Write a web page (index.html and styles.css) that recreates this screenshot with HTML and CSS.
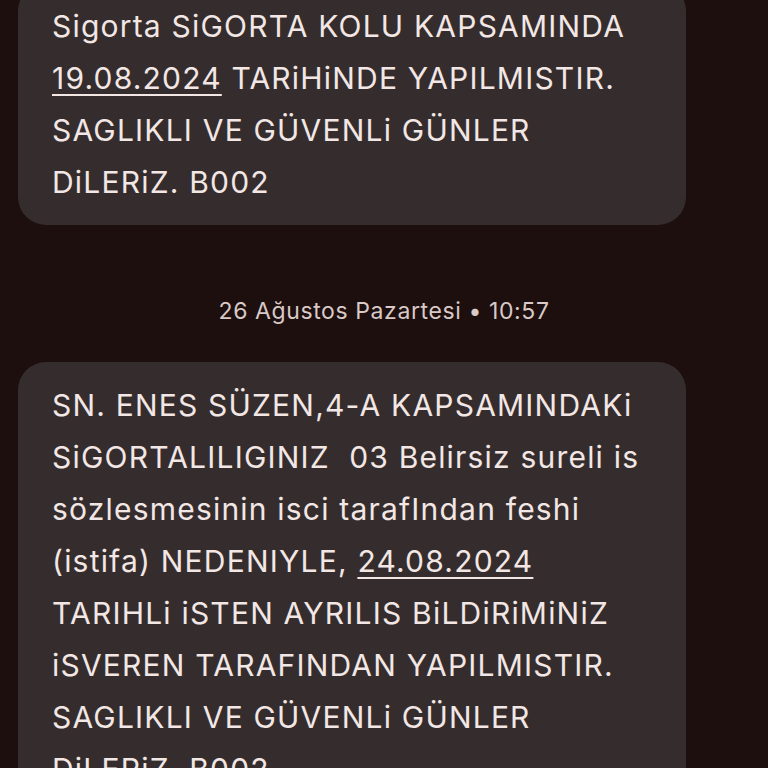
FILE: index.html
```html
<!DOCTYPE html>
<html lang="tr">
<head>
<meta charset="utf-8">
<link rel="stylesheet" href="styles.css">
</head>
<body>
<div class="thread">
  <div class="bubble">
    <p class="msg">Sigorta SiGORTA KOLU KAPSAMINDA<br><span class="link">19.08.2024</span> TARiHiNDE YAPILMISTIR.<br>SAGLIKLI VE GÜVENLi GÜNLER<br>DiLERiZ. B002</p>
  </div>
  <div class="stamp">26 Ağustos Pazartesi • 10:57</div>
  <div class="bubble">
    <p class="msg">SN. ENES SÜZEN,4-A KAPSAMINDAKi<br>SiGORTALILIGINIZ&nbsp; 03 Belirsiz sureli is<br>sözlesmesinin isci tarafIndan feshi<br>(istifa) NEDENIYLE, <span class="link">24.08.2024</span><br>TARIHLi iSTEN AYRILIS BiLDiRiMiNiZ<br>iSVEREN TARAFINDAN YAPILMISTIR.<br>SAGLIKLI VE GÜVENLi GÜNLER<br>DiLERiZ. B002</p>
  </div>
</div>
</body>
</html>
```
FILE: styles.css
```css
html, body {
  margin: 0;
  padding: 0;
  background: #1d0f0d;
  height: 100%;
  overflow: hidden;
}
body {
  font-family: Inter, Roboto, "Noto Sans", sans-serif;
  color: #f3e7e5;
}
.thread {
  display: flex;
  flex-direction: column;
  margin-top: -17px;
}
.bubble {
  background: #352d2d;
  border-radius: 28px;
  padding: 17px 34px;
  margin: 0 82px 0 18px;
}
.msg {
  margin: 0;
  font-size: 30px;
  line-height: 52px;
  letter-spacing: 1.2px;
  white-space: nowrap;
}
.link {
  text-decoration: underline;
  text-decoration-thickness: 2px;
  text-underline-offset: 5px;
}
.stamp {
  height: 137px;
  display: flex;
  align-items: center;
  justify-content: center;
  font-size: 23px;
  letter-spacing: 0.6px;
  color: #d9c9c7;
  padding-top: 34px;
  box-sizing: border-box;
}
```
